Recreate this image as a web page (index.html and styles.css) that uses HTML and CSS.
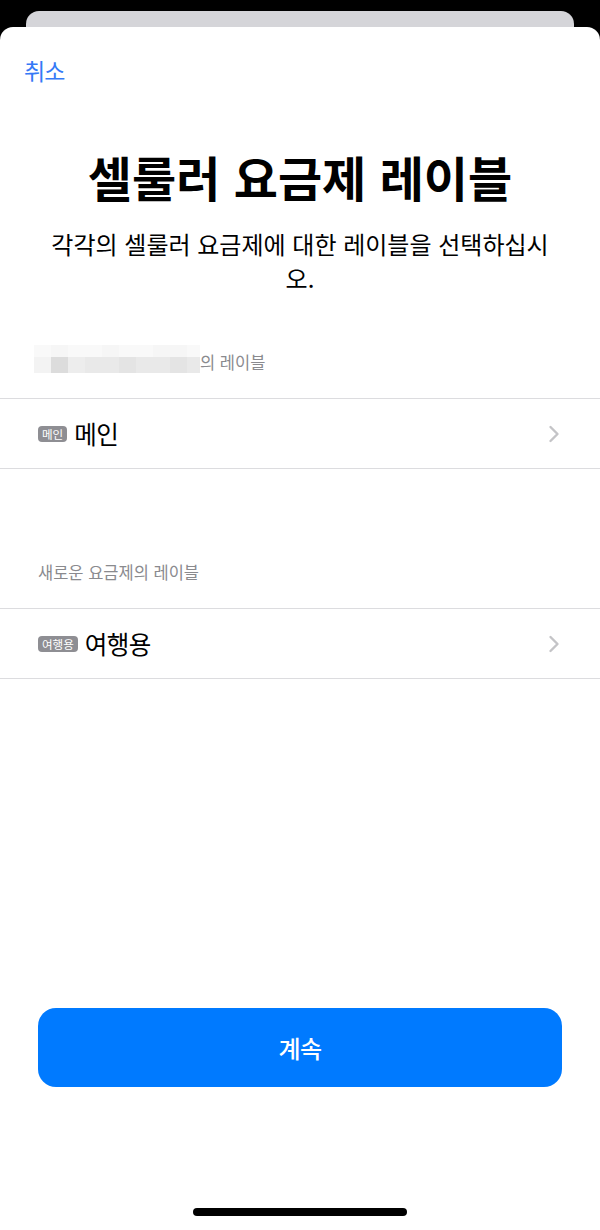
FILE: index.html
```html
<!DOCTYPE html>
<html lang="ko">
<head>
<meta charset="utf-8">
<title>셀룰러 요금제 레이블</title>
<link rel="stylesheet" href="styles.css">
</head>
<body>
<div class="screen">
  <div class="back-card"></div>
  <div class="sheet">
    <div class="nav"><span class="cancel">취소</span></div>
    <h1 class="title">셀룰러 요금제 레이블</h1>
    <p class="subtitle">각각의 셀룰러 요금제에 대한 레이블을 선택하십시오.</p>

    <div class="section-header">
      <div class="pixels">
        <div class="prow top">
          <span class="c1"></span><span class="c2"></span><span class="c1"></span><span class="c1"></span><span class="c2"></span><span class="c1"></span><span class="c1"></span><span class="c2"></span><span class="c2"></span><span class="c1"></span>
        </div>
        <div class="prow">
          <span class="c1"></span><span class="c5"></span><span class="c2"></span><span class="c3"></span><span class="c3"></span><span class="c4"></span><span class="c3"></span><span class="c3"></span><span class="c4"></span><span class="c3"></span>
        </div>
      </div>
      <span>의 레이블</span>
    </div>
    <div class="row">
      <span class="badge">메인</span>
      <span class="row-label">메인</span>
      <svg class="chevron" width="12" height="18" viewBox="0 0 12 18"><path d="M2.5 2 L9.5 9 L2.5 16" fill="none" stroke="#c4c4c7" stroke-width="2.4" stroke-linecap="round" stroke-linejoin="round"/></svg>
    </div>

    <div class="section-header second"><span>새로운 요금제의 레이블</span></div>
    <div class="row">
      <span class="badge">여행용</span>
      <span class="row-label">여행용</span>
      <svg class="chevron" width="12" height="18" viewBox="0 0 12 18"><path d="M2.5 2 L9.5 9 L2.5 16" fill="none" stroke="#c4c4c7" stroke-width="2.4" stroke-linecap="round" stroke-linejoin="round"/></svg>
    </div>

    <button class="continue">계속</button>
    <div class="home-indicator"></div>
  </div>
</div>
</body>
</html>
```

FILE: styles.css
```css
* { box-sizing: border-box; }
html, body {
  margin: 0;
  padding: 0;
  background: #000;
}
body {
  font-family: "Noto Sans CJK KR", "Noto Sans", sans-serif;
  color: #000;
}
.screen {
  width: 600px;
  height: 1230px;
  display: flex;
  flex-direction: column;
  overflow: hidden;
}
.back-card {
  margin: 11px 26px 0;
  height: 16px;
  background: #d5d5d9;
  border-radius: 13px 13px 0 0;
  flex: none;
}
.sheet {
  flex: 1;
  background: #fff;
  border-radius: 13px 13px 0 0;
  display: flex;
  flex-direction: column;
}
.nav {
  padding: 28px 0 0 24px;
  height: 58px;
}
.cancel {
  color: #3579f6;
  font-size: 23px;
  line-height: 30px;
  letter-spacing: -1px;
}
.title {
  margin: 63px 0 0;
  text-align: center;
  font-size: 48px;
  line-height: 56px;
  font-weight: 700;
  letter-spacing: 0;
}
.subtitle {
  margin: 23px 46px 0;
  text-align: center;
  font-size: 24px;
  line-height: 34px;
  letter-spacing: 0;
}
.section-header {
  margin-top: 56px;
  padding: 0 0 25px 34px;
  height: 47px;
  display: flex;
  align-items: center;
  font-size: 16.5px;
  line-height: 22px;
  color: #8a8a8e;
  letter-spacing: 0;
}
.section-header.second {
  margin-top: 92px;
  padding-left: 38px;
}
.pixels {
  display: flex;
  flex-direction: column;
  width: 166px;
  height: 28px;
  margin-top: -6px;
}
.prow {
  display: flex;
  height: 16px;
}
.prow.top {
  height: 12px;
  opacity: 0.45;
}
.prow span {
  width: 17px;
  flex: none;
}
.prow span:last-child { width: 13px; }
.c1 { background: #f3f3f3; }
.c2 { background: #ededed; }
.c3 { background: #e9e9e9; }
.c4 { background: #e4e4e4; }
.c5 { background: #dcdcdc; }

.row {
  height: 71px;
  border-top: 1px solid #dcdcdf;
  border-bottom: 1px solid #dcdcdf;
  display: flex;
  align-items: center;
  padding: 0 40px 0 38px;
}
.badge {
  background: #8e8e93;
  color: #fff;
  font-size: 11.5px;
  line-height: 16px;
  height: 16px;
  padding: 0 4px;
  border-radius: 4px;
  letter-spacing: 0;
  margin-right: 7px;
}
.row-label {
  font-size: 24.5px;
  line-height: 30px;
  letter-spacing: -0.5px;
  flex: 1;
}
.chevron {
  flex: none;
  margin-top: 1px;
}
.continue {
  margin: auto 38px 0;
  height: 79px;
  border: 0;
  border-radius: 18px;
  background: #007aff;
  color: #fff;
  font-family: inherit;
  font-size: 24px;
  letter-spacing: -0.5px;
  font-weight: 500;
}
.home-indicator {
  margin: 121px auto 14px;
  width: 214px;
  height: 8px;
  border-radius: 4px;
  background: #000;
}
```
